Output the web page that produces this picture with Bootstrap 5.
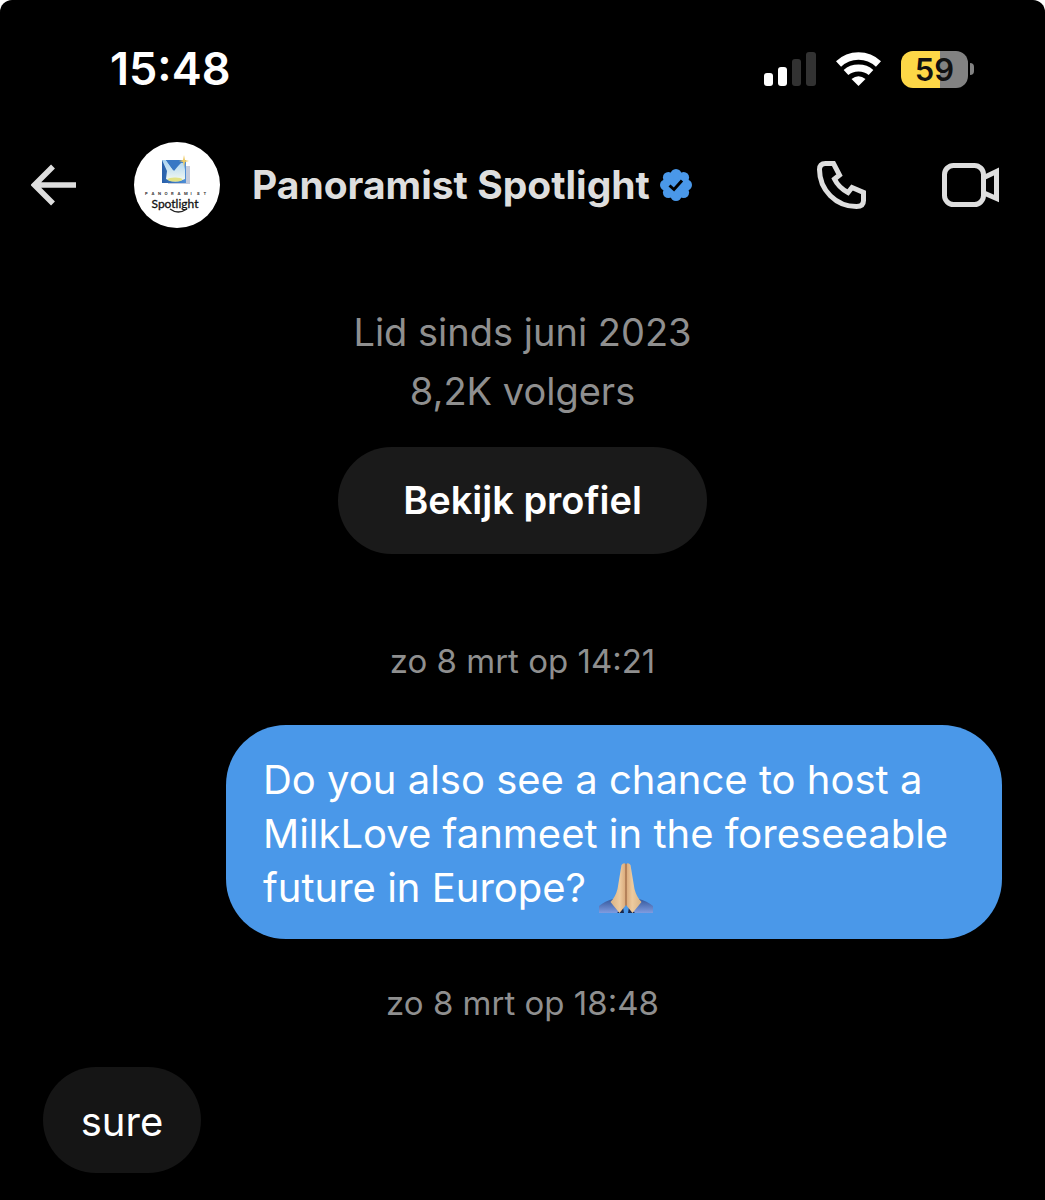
<!DOCTYPE html>
<html lang="nl">
<head>
<meta charset="utf-8">
<meta name="viewport" content="width=device-width, initial-scale=1">
<title>Panoramist Spotlight</title>
<link href="https://cdn.jsdelivr.net/npm/bootstrap@5.3.0/dist/css/bootstrap.min.css" rel="stylesheet">
<style>
body{background:#fff;font-family:Inter,"Liberation Sans",sans-serif}
.phone{background:#000;color:#fff;border-radius:12px 12px 0 0}
.status{padding:41px 71px 0 110px;line-height:56px}
.clock{font-size:45px;font-weight:600}
.status-icons{gap:20px}
.battery{width:67px;height:37px;border-radius:12px;background:linear-gradient(90deg,#fdd747 0 39px,#828282 39px);color:#111;font-size:31px;font-weight:600;line-height:37px}
.nub{width:4px;height:12px;margin-left:2px;border-radius:0 6px 6px 0;background:#828282}
.chat-head{padding:45px 46px 0 31px;color:#dedede}
.icon-btn{background:none;border:0;padding:0;color:#dedede;line-height:0}
.avatar-link{margin-left:58px;width:86px;height:86px}
.peer{margin:0 10px 0 32px;font-size:39px;line-height:56px;font-weight:700;color:#dedede}
.calls{gap:75px}
.about{padding-top:75px;font-size:38px;line-height:59px;color:#8f8f8f}
.profile-btn{margin-top:26px;padding:25px 65px;border:0;background:#1a1a1a;color:#fff;font-size:38px;line-height:57px;font-weight:600}
.thread{gap:44px;padding:87px 43px 27px}
.stamp{font-size:33px;line-height:40px;color:#8f8f8f}
.bubble{padding:28px 37px 24px;border-radius:60px;font-size:40px;line-height:54px;color:#fff;min-width:158px;max-width:776px}
.mine{background:#4a98e9}
.theirs{background:#151515}
.emoji{vertical-align:-8px;margin:-4px 0 -4px 2px}
</style>
<script src="https://cdn.jsdelivr.net/npm/bootstrap@5.3.0/dist/js/bootstrap.bundle.min.js"></script>
</head>
<body>
<div class="phone min-vh-100">
  <div class="status d-flex justify-content-between align-items-center">
    <span class="clock">15:48</span>
    <div class="status-icons d-flex align-items-center">
      <svg width="53" height="34" viewBox="0 0 53 34" aria-hidden="true"><g fill="#fff"><rect x="1" y="21" width="9" height="13" rx="3"/><rect x="15" y="15" width="9" height="19" rx="3"/></g><g fill="#323232"><rect x="29" y="7" width="9" height="27" rx="3"/><rect x="43" width="10" height="34" rx="3"/></g></svg>
      <svg width="45" height="34" viewBox="0 0 45 34" aria-hidden="true"><g fill="none" stroke="#fff"><path d="M2.500 12Q11 4 22.500 4T42.500 12" stroke-width="7.500"/><path d="M10 20.500Q15 16 22.500 16T35 20.500" stroke-width="7"/></g><path d="M22.500 34 15.500 27Q22.500 21.500 29.500 27Z" fill="#fff"/></svg>
      <div class="d-flex align-items-center"><div class="battery text-center">59</div><div class="nub"></div></div>
    </div>
  </div>
  <header class="chat-head d-flex align-items-center">
    <button class="icon-btn" type="button" aria-label="Terug"><svg width="45" height="42" viewBox="0 0 45 42" fill="none" stroke="currentColor" stroke-width="5.500"><path d="M45 21H4M22 2.500 3.500 21 22 39.500"/></svg></button>
    <a class="avatar-link" href="#" aria-label="Profiel"><svg class="d-block" width="86" height="86" viewBox="0 0 86 86">
      <defs><linearGradient id="sq" x1="0" x2="1"><stop stop-color="#285fa9"/><stop offset="1" stop-color="#4f8fd6"/></linearGradient><linearGradient id="beam" x2="0" y2="1"><stop stop-color="#a9d3f2"/><stop offset="1" stop-color="#f7faf0"/></linearGradient></defs>
      <circle cx="43" cy="43" r="43" fill="#fff"/>
      <path d="M50 24h6v18H34v-4h16z" fill="#c4cbdc"/><path d="M28 18h24v23H28z" fill="url(#sq)"/>
      <path d="M28 18h4l7 10 8-7 3 0 1 7 0 9q-10 5-19 0l1-8z" fill="url(#beam)"/><path d="M32 18h17l-9 11z" fill="#3978c4"/>
      <ellipse cx="41" cy="37.500" rx="7.500" ry="2" fill="#e2e284"/><path d="M50 13l1 5 4 1-4 1-1 5-1-5-4-1 4-1z" fill="#edca65"/>
      <text x="11 17.500 24 30.500 37 43.500 50 56.500 63 69.500" y="53" font-family="Inter,sans-serif" font-size="4" font-weight="700" fill="#333">PANORAMIST</text>
      <text x="41" y="66" text-anchor="middle" font-family="Lato,sans-serif" font-size="12" fill="#111" stroke="#111" stroke-width=".3">Spotlight</text>
      <path d="M36 67q8 6 17 0" fill="none" stroke="#222" stroke-width="1.300"/>
    </svg></a>
    <h1 class="peer">Panoramist Spotlight</h1>
    <svg width="32" height="32" viewBox="0 0 32 32" role="img" aria-label="Geverifieerd"><g fill="#4a98e9"><circle cx="16" cy="16" r="13"/><circle cx="16" cy="5.500" r="5.500"/><circle cx="16" cy="26.500" r="5.500"/><circle cx="5.500" cy="16" r="5.500"/><circle cx="26.500" cy="16" r="5.500"/><circle cx="8.400" cy="8.400" r="5.500"/><circle cx="23.600" cy="8.400" r="5.500"/><circle cx="8.400" cy="23.600" r="5.500"/><circle cx="23.600" cy="23.600" r="5.500"/></g><path d="M9.500 16.500 14 20.500 22 11.500" fill="none" stroke="#000" stroke-width="3"/></svg>
    <div class="calls d-flex align-items-center ms-auto">
      <button class="icon-btn" type="button" aria-label="Bellen"><svg width="50" height="48" viewBox="0 0 50 48" fill="none" stroke="currentColor" stroke-width="5"><path d="M16.500 2.500H8.500Q2.500 2.500 2.500 8.500C2.500 29 19 45.500 39.500 45.500Q46.500 45.500 46.500 39.500V31.500L35 26.500 31 31.500Q21.500 26.500 17.500 18L22.500 14Z"/></svg></button>
      <button class="icon-btn" type="button" aria-label="Videogesprek"><svg width="57" height="44" viewBox="0 0 57 44" fill="none" stroke="currentColor" stroke-width="5"><rect x="2.500" y="2.500" width="39" height="39" rx="9"/><path d="M42 14.500 54.500 8.500V35.500L42 30"/></svg></button>
    </div>
  </header>
  <main>
    <section class="about text-center">
      <div>Lid sinds juni 2023</div>
      <div>8,2K volgers</div>
      <button class="profile-btn btn rounded-pill" type="button">Bekijk profiel</button>
    </section>
    <section class="thread d-flex flex-column">
      <div class="stamp text-center">zo 8 mrt op 14:21</div>
      <div class="bubble mine align-self-end">Do you also see a chance to host a MilkLove fanmeet in the foreseeable future in Europe? <svg class="emoji" width="54" height="51" viewBox="0 0 54 51" role="img" aria-label="Gevouwen handen">
        <defs><linearGradient id="sl" x2="0" y2="1"><stop stop-color="#34589c"/><stop offset="1" stop-color="#7f9ce0"/></linearGradient><linearGradient id="skin"><stop stop-color="#d9b385"/><stop offset=".3" stop-color="#edcb9f"/><stop offset=".46" stop-color="#dcae80"/><stop offset=".5" stop-color="#9a6440"/><stop offset=".54" stop-color="#dcae80"/><stop offset=".7" stop-color="#edcb9f"/><stop offset="1" stop-color="#d9b385"/></linearGradient></defs>
        <path d="M0 43Q6 38 14 36L25 50H0zM54 43Q48 38 40 36L29 50H54z" fill="url(#sl)"/><path d="M18 50l6-6 1 6zM36 50l-6-6-1 6z" fill="#17284f"/>
        <path d="M22.500 2q2-3 4.500-1 2.500-2 4.500 1l4 24q2 8 7 13l-9 11-6.500-8-6.500 8-9-11q5-5 7-13z" fill="url(#skin)"/>
      </svg></div>
      <div class="stamp text-center">zo 8 mrt op 18:48</div>
      <div class="bubble theirs align-self-start text-center">sure</div>
    </section>
  </main>
</div>
</body>
</html>
